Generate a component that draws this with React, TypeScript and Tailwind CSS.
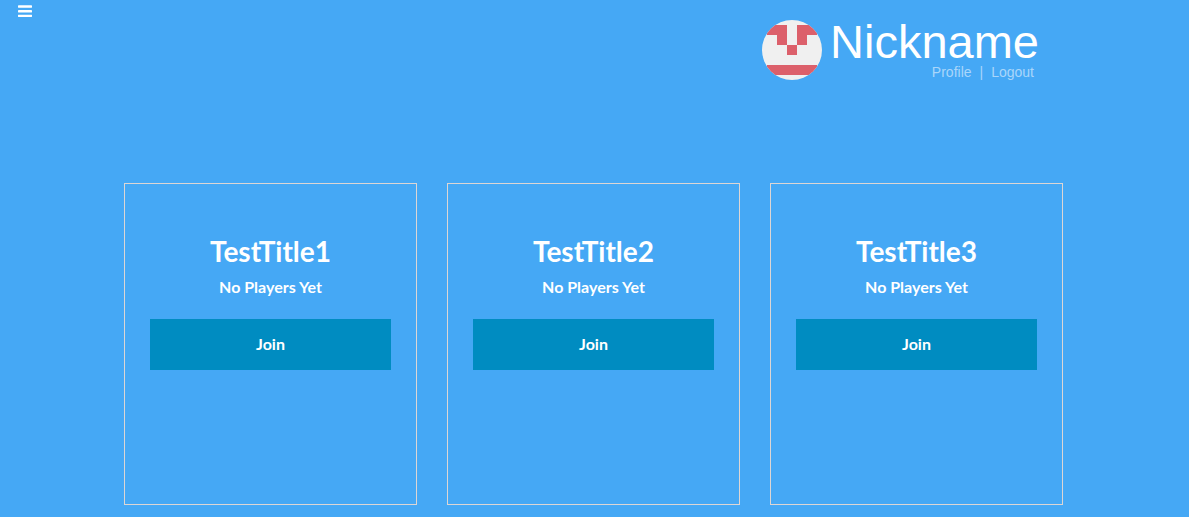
import React from "react";

const games = ["TestTitle1", "TestTitle2", "TestTitle3"];

function MenuIcon() {
  return (
    <svg width="14" height="12" viewBox="0 0 14 12" fill="currentColor" aria-hidden="true">
      <rect y="0.3" width="14" height="2.4" rx="0.4" />
      <rect y="5" width="14" height="2.4" rx="0.4" />
      <rect y="9.7" width="14" height="2.3" rx="0.4" />
    </svg>
  );
}

function Avatar() {
  return (
    <svg viewBox="0 0 60 60" className="h-[60px] w-[60px] shrink-0 rounded-full bg-[#f0f0f0]" role="img" aria-label="Avatar">
      <path fill="#dc606b" d="M5 5h20v20h10V5h20v10H45v10H35v10H25V25H15V15H5zM5 45h50v10H5z" />
    </svg>
  );
}

function GameCard({ title }: { title: string }) {
  return (
    <article className="min-h-[322px] border border-[#ddd6d4] px-[25px] pt-[49px] text-center">
      <h2 className="text-[28px] leading-9 font-bold">{title}</h2>
      <p className="mt-1.5 text-base leading-6 font-bold">No Players Yet</p>
      <button type="button" className="mt-5 h-[51px] w-full bg-[#008cc1] pb-0.5 text-base font-bold">
        Join
      </button>
    </article>
  );
}

export default function App() {
  return (
    <div className="min-h-screen bg-[#45a8f5] pb-3 font-[Lato,sans-serif] text-white">
      <header className="flex items-start justify-between pr-[150px] pl-[18px]">
        <button type="button" aria-label="Open menu" className="pt-[5px]">
          <MenuIcon />
        </button>
        <div className="flex gap-2 pt-5 font-['Liberation_Sans',sans-serif]">
          <Avatar />
          <div className="text-right">
            <div className="text-[47px] leading-[44px]">Nickname</div>
            <nav className="flex justify-end gap-2 pr-[5px] text-sm leading-4 text-[#a9d6fa]">
              <a href="#profile">Profile</a>
              <span>|</span>
              <a href="#logout">Logout</a>
            </nav>
          </div>
        </div>
      </header>
      <main className="mt-[103px] grid grid-cols-3 gap-[30px] pr-[126px] pl-[124px]">
        {games.map((title) => (
          <GameCard key={title} title={title} />
        ))}
      </main>
    </div>
  );
}
